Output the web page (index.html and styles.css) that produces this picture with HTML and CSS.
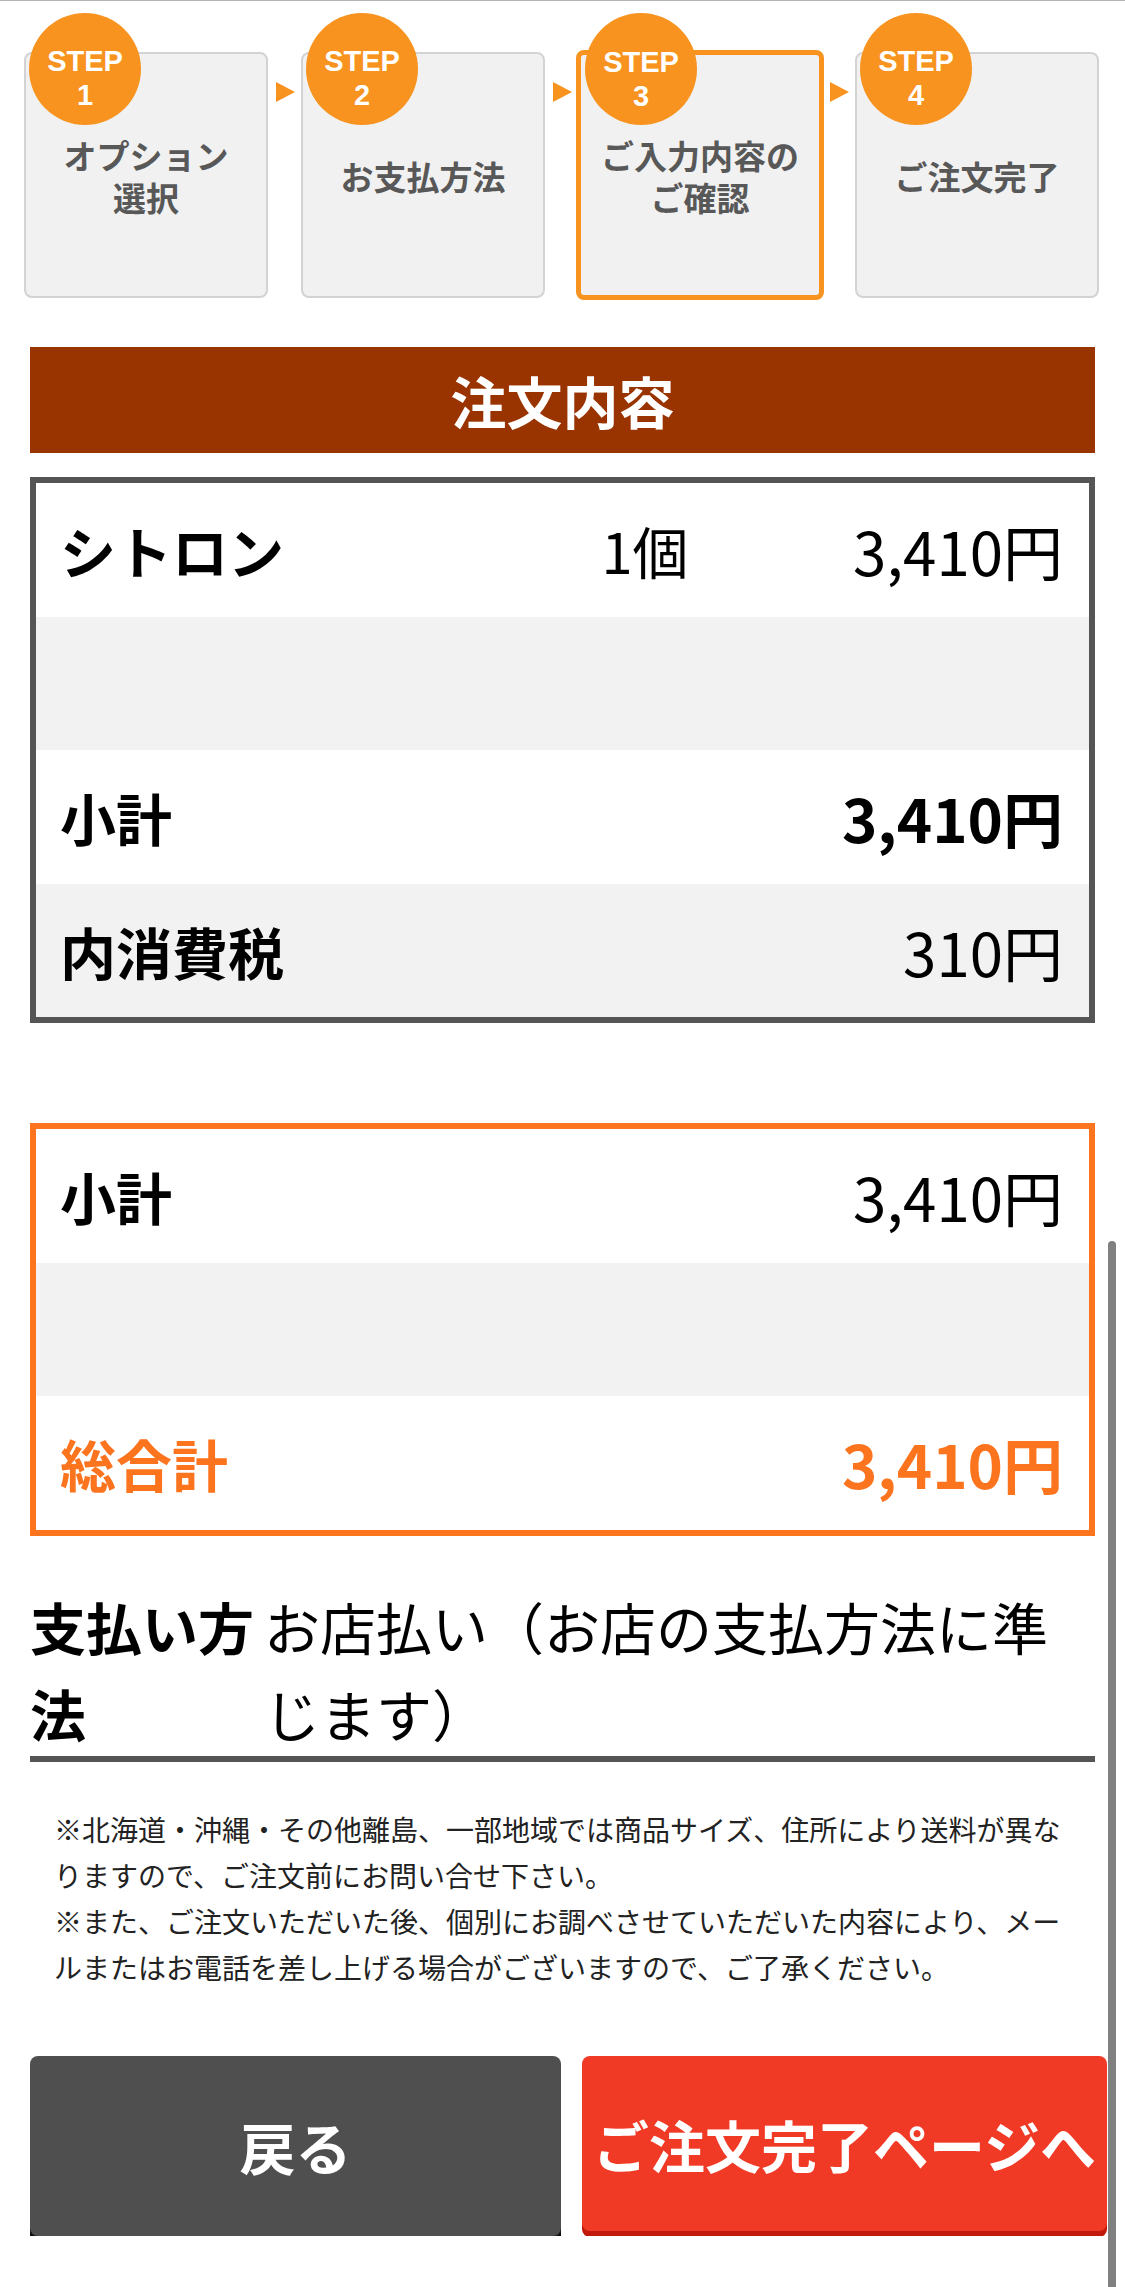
FILE: index.html
```html
<!DOCTYPE html>
<html lang="ja">
<head>
    <meta charset="UTF-8">
    <meta name="viewport" content="width=device-width, initial-scale=1.0">
    <title>ご入力内容のご確認</title>
    <link rel="stylesheet" href="styles.css">
</head>
<body>
    <div class="steps">
        <div class="step">
            <div class="step-num">STEP<br>1</div>
            <p class="step-label">オプション<br>選択</p>
        </div>
        <span class="arrow"></span>
        <div class="step">
            <div class="step-num">STEP<br>2</div>
            <p class="step-label">お支払方法</p>
        </div>
        <span class="arrow"></span>
        <div class="step active">
            <div class="step-num">STEP<br>3</div>
            <p class="step-label">ご入力内容の<br>ご確認</p>
        </div>
        <span class="arrow"></span>
        <div class="step">
            <div class="step-num">STEP<br>4</div>
            <p class="step-label">ご注文完了</p>
        </div>
    </div>

    <main class="page">
        <h2 class="band">注文内容</h2>

        <div class="order-table">
            <div class="row">
                <span class="name">シトロン</span>
                <span class="qty">1個</span>
                <span class="price">3,410円</span>
            </div>
            <div class="row gray"></div>
            <div class="row">
                <span class="name">小計</span>
                <span class="price strong">3,410円</span>
            </div>
            <div class="row gray">
                <span class="name">内消費税</span>
                <span class="price">310円</span>
            </div>
        </div>

        <div class="order-table total-box">
            <div class="row">
                <span class="name">小計</span>
                <span class="price">3,410円</span>
            </div>
            <div class="row gray"></div>
            <div class="row grand">
                <span class="name">総合計</span>
                <span class="price strong">3,410円</span>
            </div>
        </div>

        <dl class="payment">
            <dt>支払い方法</dt>
            <dd>お店払い（お店の支払方法に準じます）</dd>
        </dl>

        <div class="notes">
            <p>※北海道・沖縄・その他離島、一部地域では商品サイズ、住所により送料が異なりますので、ご注文前にお問い合せ下さい。</p>
            <p>※また、ご注文いただいた後、個別にお調べさせていただいた内容により、メールまたはお電話を差し上げる場合がございますので、ご了承ください。</p>
        </div>

        <div class="actions">
            <a class="btn btn-back" href="#">戻る</a>
            <a class="btn btn-next" href="#">ご注文完了ページへ</a>
        </div>
    </main>

    <div class="scroll-thumb"></div>
</body>
</html>
```

FILE: styles.css
```css
body{
    margin: 0;
    border-top: 1px solid #b3b3b3;
    background: #fff;
    color: #000;
    font-family: "Noto Sans CJK JP", "Noto Sans", sans-serif;
}

/* step indicator */
.steps{
    display: flex;
    align-items: flex-start;
    padding: 51px 0 0 24px;
}
.step{
    position: relative;
    box-sizing: border-box;
    width: 244px;
    height: 246px;
    border: 2px solid #d3d3d3;
    border-radius: 8px;
    background-color: #f1f1f1;
    display: flex;
    align-items: center;
    justify-content: center;
    padding-top: 8px;
}
.step.active{
    width: 248px;
    height: 250px;
    margin: -2px -2px 0;
    border: 5px solid #f7931e;
}
.step-num{
    position: absolute;
    top: -41px;
    left: 3px;
    width: 112px;
    height: 112px;
    border-radius: 50%;
    background-color: #f7931e;
    color: #fff;
    font-family: "Liberation Sans", Arial, sans-serif;
    font-weight: bold;
    font-size: 29px;
    line-height: 34px;
    text-align: center;
    box-sizing: border-box;
    padding-top: 31px;
}
.step.active .step-num{
    top: -42px;
    left: 4px;
    padding-top: 32px;
}
.step-label{
    margin: 0;
    color: #585858;
    font-family: "Liberation Sans", "Noto Sans CJK JP", sans-serif;
    font-size: 33px;
    font-weight: bold;
    line-height: 42px;
    text-align: center;
}
.arrow{
    width: 0;
    height: 0;
    margin: 30px 6px 0 8px;
    border-top: 10px solid transparent;
    border-bottom: 10px solid transparent;
    border-left: 19px solid #f7931e;
}

/* content */
.page{
    margin: 0 30px;
}
.band{
    margin: 47px 0 0;
    height: 106px;
    line-height: 106px;
    background-color: #993300;
    color: #fff;
    font-size: 56px;
    font-weight: bold;
    text-align: center;
}
.order-table{
    margin-top: 24px;
    border: 6px solid #555;
}
.row{
    display: grid;
    grid-template-columns: 495px 180px 1fr;
    align-items: center;
    height: 133.5px;
    padding: 0 26px 0 24px;
    background-color: #fff;
    font-size: 56px;
}
.row.gray{
    background-color: #f2f2f2;
}
.name{
    font-weight: bold;
}
.qty{
    text-align: center;
}
.price{
    grid-column: 3;
    text-align: right;
    font-size: 60px;
}
.strong{
    font-weight: bold;
}
.total-box{
    margin-top: 100px;
    border-color: #fd741f;
}
.grand{
    color: #fd741f;
}

.payment{
    display: grid;
    grid-template-columns: 234px 1fr;
    margin: 46px 0 0;
    border-bottom: 6px solid #555;
    font-size: 56px;
    line-height: 87px;
}
.payment dt{
    font-weight: bold;
}
.payment dd{
    margin: 0;
}

.notes{
    margin-top: 44px;
    padding: 0 24px;
    color: #222;
    font-size: 28px;
    line-height: 46px;
}
.notes p{
    margin: 0;
}

.actions{
    display: flex;
    gap: 21px;
    margin-top: 66px;
}
.btn{
    display: flex;
    align-items: center;
    justify-content: center;
    flex: none;
    border-radius: 8px;
    color: #fff;
    font-size: 56px;
    font-weight: bold;
    text-decoration: none;
    white-space: nowrap;
}
.btn-back{
    width: 531px;
    height: 180px;
    background-color: #4f4f4f;
    box-shadow: 0 7px 0 #111;
}
.btn-next{
    width: 525px;
    height: 175px;
    background-color: #f03a26;
    box-shadow: 0 6px 0 #c1190c;
}

.scroll-thumb{
    position: fixed;
    top: 1241px;
    right: 9px;
    bottom: 0;
    width: 8px;
    border-radius: 4px 4px 0 0;
    background-color: #808080;
}
```
